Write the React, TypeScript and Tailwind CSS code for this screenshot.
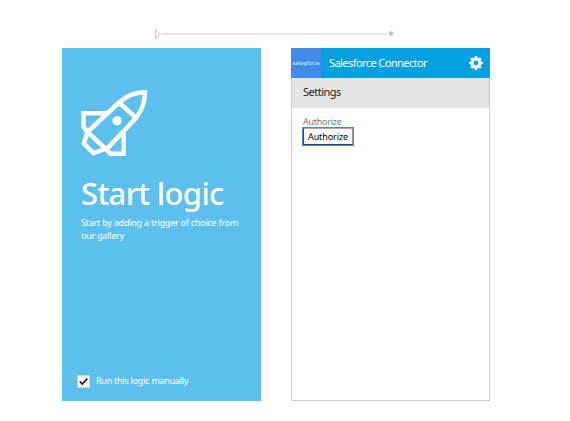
function RocketIcon() {
  return (
    <svg className="block h-[68px] w-[68px]" viewBox="0 0 68 68" fill="none" stroke="white" strokeWidth="4.5">
      <path d="M7.5 43 L38.5 14 C46 7 55 3.2 65 3.2 C64.8 12 62 21.5 56 29 L26.3 60.5 Z" />
      <path d="M39 13.5 L56 28.8" />
      <path d="M28 24.3 H3.6 V38 L8 43.3" />
      <path d="M43.7 41 V64.8 H30.5 L25.5 59.5" />
      <path d="M7.5 43 L3.8 54.3 L13.5 64.2 L26 59.5" />
      <circle cx="37" cy="31.7" r="4.7" fill="white" stroke="none" />
    </svg>
  );
}

const gearAngles = [0, 45, 90, 135, 180, 225, 270, 315];

function GearIcon() {
  return (
    <svg className="h-[14px] w-[14px]" viewBox="-7 -7 14 14" fill="white">
      <circle r="3.8" fill="none" stroke="white" strokeWidth="2.8" />
      {gearAngles.map((angle) => (
        <path key={angle} d="M-1.7-4.5-1.1-6.9H1.1L1.7-4.5z" transform={`rotate(${angle})`} />
      ))}
    </svg>
  );
}

function Connector() {
  return (
    <div className="ml-[155px] flex h-[10px] w-[239px] items-center">
      <svg className="h-[10px] w-[7px] shrink-0" viewBox="0 0 7 10" fill="#f5f6f8" stroke="#c4c8ce">
        <path d="M.5.5 5.5 5 .5 9.5z" />
      </svg>
      <div className="h-[2px] w-[225px] bg-[#e5e6e7]" />
      <svg className="ml-[1px] h-[6px] w-[6px] shrink-0" viewBox="0 0 6 6">
        <circle cx="3" cy="2.6" r="2.3" fill="#bdc3c9" />
      </svg>
    </div>
  );
}

export default function App() {
  return (
    <main className="h-[421px] w-[570px] overflow-hidden bg-white pt-[29px] font-['Noto_Sans',sans-serif]">
      <Connector />
      <div className="mt-[9px] ml-[62px] flex gap-[30px]">
        <section className="flex h-[353px] w-[199px] flex-col bg-[#5dbfed] text-white">
          <div className="mt-[41px] ml-[18px]">
            <RocketIcon />
          </div>
          <h1 className="mt-[14px] ml-[19px] h-[44px] whitespace-nowrap text-[31px] leading-[44px] font-medium tracking-[-0.65px]">
            Start logic
          </h1>
          <p className="mt-[1px] ml-[19px] whitespace-nowrap text-[9px] leading-[13px] tracking-[-0.23px]">
            Start by adding a trigger of choice from
            <br />
            our gallery
          </p>
          <label className="mt-auto mb-[13px] ml-[15px] flex h-[14px] items-center text-[9px] tracking-[-0.25px]">
            <span className="flex h-[13px] w-[13px] items-center justify-center border border-[#c8d0d4] bg-white">
              <svg className="h-[9px] w-[9px]" viewBox="0 0 9 9" fill="none" stroke="#1b2530" strokeWidth="1.8">
                <path d="M.8 4.4 3.3 7 8.3 1.6" />
              </svg>
            </span>
            <span className="ml-[6px] whitespace-nowrap">Run this logic manually</span>
          </label>
        </section>

        <section className="h-[353px] w-[199px] border border-t-0 border-[#cccccc] bg-white">
          <header className="-mx-px flex h-[30px] items-center bg-[#04a1e2] text-white">
            <div className="flex h-[30px] w-[30px] items-center justify-center bg-[#3f8de8] text-[6px] tracking-[-0.1px] text-[#dceaff]">
              <span>
                sales<i>f</i>orce
              </span>
            </div>
            <h2 className="ml-[8px] whitespace-nowrap text-[11px] leading-[30px] tracking-[-0.57px]">
              Salesforce Connector
            </h2>
            <div className="mr-[7px] ml-auto">
              <GearIcon />
            </div>
          </header>
          <div className="h-[30px] bg-[#e5e5e5] pl-[11px] text-[11px] leading-[28px] tracking-[-0.5px] text-[#222]">
            Settings
          </div>
          <div className="pt-[8px] pl-[10px]">
            <div className="ml-[1px] h-[11px] text-[9px] leading-[12px] tracking-[-0.25px] text-[#777]">Authorize</div>
            <button className="block h-[19px] w-[52px] border border-[#4a86e8] bg-white text-[9px] leading-[15px] tracking-[-0.1px] text-black">
              <span className="block h-[17px] border border-t-[#aaa] border-r-[#999] border-b-[#444] border-l-[#444]">
                Authorize
              </span>
            </button>
          </div>
        </section>
      </div>
    </main>
  );
}
